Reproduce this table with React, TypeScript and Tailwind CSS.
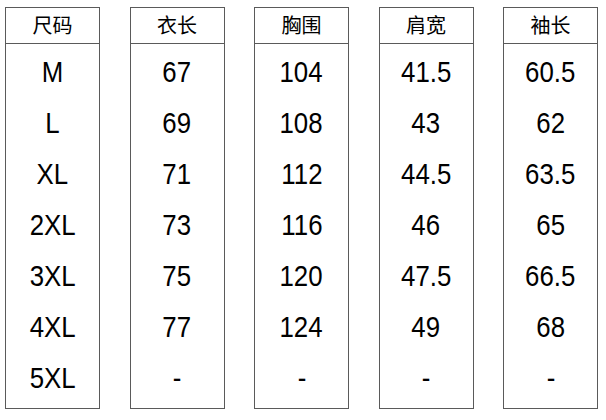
import React from "react";

const cols: { title: string; values: string[] }[] = [
  { title: "尺码", values: ["M", "L", "XL", "2XL", "3XL", "4XL", "5XL"] },
  { title: "衣长", values: ["67", "69", "71", "73", "75", "77", "-"] },
  { title: "胸围", values: ["104", "108", "112", "116", "120", "124", "-"] },
  { title: "肩宽", values: ["41.5", "43", "44.5", "46", "47.5", "49", "-"] },
  { title: "袖长", values: ["60.5", "62", "63.5", "65", "66.5", "68", "-"] },
];

export default function App() {
  return (
    <div
      className="w-[606px] h-[420px] bg-white flex gap-[29.5px] pl-[5px] pt-[7px] text-black"
      style={{ fontFamily: '"Liberation Sans", "Noto Sans CJK SC", sans-serif' }}
    >
      {cols.map((c) => (
        <div
          key={c.title}
          className="w-[95px] h-[402px] border-[1.5px] border-[#5a5a5a] flex flex-col"
        >
          <div className="h-[36px] border-b-[1.5px] border-[#5a5a5a] flex items-center justify-center text-[20px] leading-none">
            {c.title}
          </div>
          <div className="flex flex-col pt-[2px]">
            {c.values.map((v, i) => (
              <div
                key={i}
                className="h-[51px] flex items-center justify-center text-[30px] leading-none"
              >
                <span className="inline-block scale-x-[0.86]">{v}</span>
              </div>
            ))}
          </div>
        </div>
      ))}
    </div>
  );
}
